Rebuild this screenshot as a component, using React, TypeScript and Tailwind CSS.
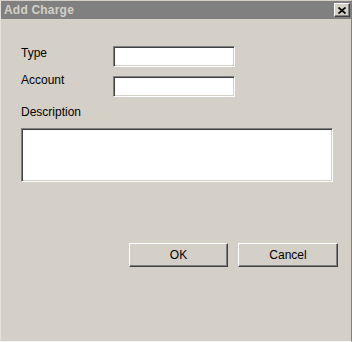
import React from 'react';

const sunken =
  'bg-white border border-t-[#808080] border-l-[#808080] border-b-white border-r-white shadow-[inset_1px_1px_0_#404040,inset_-1px_-1px_0_#d4d0c8]';

const raised =
  'bg-[#d4d0c8] border border-t-white border-l-white border-b-[#404040] border-r-[#404040] shadow-[inset_-1px_-1px_0_#808080]';

function CloseButton() {
  return (
    <button className={`${raised} w-[16px] h-[14px] flex items-center justify-center p-0`}>
      <svg width="8" height="7" viewBox="0 0 8 7">
        <path d="M0.5 0.5 L7.5 6.5 M7.5 0.5 L0.5 6.5" stroke="#000" strokeWidth="1.7" />
      </svg>
    </button>
  );
}

function DialogButton({ label }: { label: string }) {
  return (
    <button className={`${raised} h-[24px] text-[12px] text-black leading-none`}>
      {label}
    </button>
  );
}

export default function App() {
  return (
    <div
      className="w-[352px] h-[342px] bg-[#d4d0c8] flex flex-col border border-t-[#d4d0c8] border-l-[#e4e1dc] border-r-[#808080] border-b-[#f0efec]"
      style={{ fontFamily: '"Liberation Sans", Arial, sans-serif' }}
    >
      <div className="h-[18px] bg-[#808080] flex items-center justify-between pl-[3px] pr-[1px]">
        <span className="text-[12px] font-bold text-[#d4d0c8] leading-none tracking-[0.2px]">Add Charge</span>
        <CloseButton />
      </div>

      <div className="flex-1 flex flex-col pl-[20px] pr-[13px]">
        <div className="flex mt-[27px]">
          <div className="w-[92px] flex flex-col text-[12px] leading-[14px] text-black">
            <span>Type</span>
            <span className="mt-[13px]">Account</span>
          </div>
          <div className="flex flex-col gap-[9px]">
            <input className={`${sunken} w-[122px] h-[21px] outline-none`} />
            <input className={`${sunken} w-[122px] h-[21px] outline-none`} />
          </div>
        </div>

        <span className="mt-[8px] text-[12px] leading-[14px] text-black">Description</span>
        <textarea className={`${sunken} mt-[9px] w-[312px] h-[54px] resize-none outline-none`} />

        <div className="mt-[61px] flex justify-end gap-[10px]">
          <div className="w-[99px] flex flex-col">
            <DialogButton label="OK" />
          </div>
          <div className="w-[100px] flex flex-col">
            <DialogButton label="Cancel" />
          </div>
        </div>
      </div>
    </div>
  );
}
